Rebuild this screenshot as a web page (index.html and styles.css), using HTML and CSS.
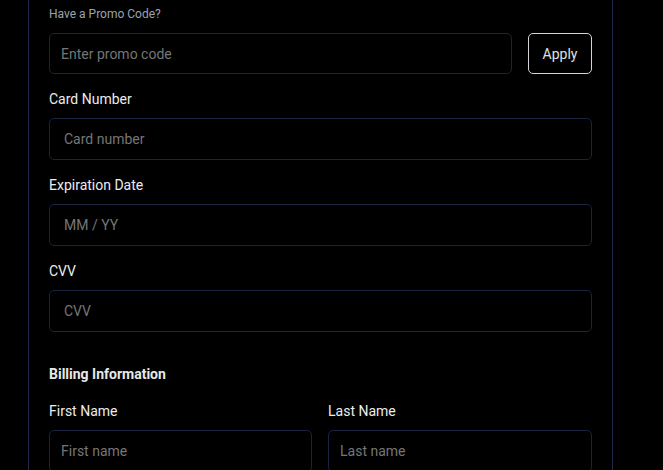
FILE: index.html
```html
<!DOCTYPE html>
<html lang="en">
<head>
<meta charset="utf-8">
<title>Payment</title>
<link rel="stylesheet" href="styles.css">
</head>
<body>
<div class="page">
  <form class="card">
    <div class="promo">
      <div class="promo-label">Have a Promo Code?</div>
      <div class="promo-row">
        <input class="input input-sm" type="text" placeholder="Enter promo code">
        <button class="btn-apply" type="button">Apply</button>
      </div>
    </div>

    <div class="field">
      <label class="label">Card Number</label>
      <input class="input input-card" type="text" placeholder="Card number">
    </div>
    <div class="field">
      <label class="label">Expiration Date</label>
      <input class="input input-card" type="text" placeholder="MM / YY">
    </div>
    <div class="field">
      <label class="label">CVV</label>
      <input class="input input-card" type="text" placeholder="CVV">
    </div>

    <h3 class="section-title">Billing Information</h3>
    <div class="grid-2">
      <div class="field">
        <label class="label">First Name</label>
        <input class="input input-sm" type="text" placeholder="First name">
      </div>
      <div class="field">
        <label class="label">Last Name</label>
        <input class="input input-sm" type="text" placeholder="Last name">
      </div>
    </div>
  </form>
</div>
</body>
</html>
```
FILE: styles.css
```css
* { box-sizing: border-box; }
html, body {
  margin: 0;
  padding: 0;
  background: #000;
  font-family: Roboto, "Liberation Sans", sans-serif;
  color: #e5e7eb;
  overflow: hidden;
}
.page {
  padding: 0 50px 0 28px;
  height: 470px;
}
.card {
  width: 585px;
  border: 1px solid #1c2748;
  border-top: 0;
  border-bottom: 0;
  padding: 6px 20px 40px;
  background: #000;
  height: 470px;
}
.promo-label {
  font-size: 12px;
  line-height: 16px;
  color: #9ca3af;
  margin-bottom: 11px;
}
.promo-row {
  display: flex;
  gap: 16px;
  margin-bottom: 15px;
}
.promo-row .input {
  flex: 1;
  height: 41px;
}
.btn-apply {
  width: 64px;
  height: 41px;
  background: #000;
  border: 1px solid #d4d4d4;
  border-radius: 5px;
  color: #e0e0e0;
  font-family: Roboto, "Liberation Sans", sans-serif;
  font-size: 14px;
  font-weight: 400;
  padding: 0;
}
.field {
  display: flex;
  flex-direction: column;
  margin-bottom: 15px;
}
.label {
  font-size: 14px;
  line-height: 20px;
  font-weight: 400;
  color: #ececec;
  margin-bottom: 9px;
}
.input {
  width: 100%;
  height: 42px;
  background: #000;
  border: 1px solid #1a2440;
  border-radius: 5px;
  color: #e5e7eb;
  font-family: Roboto, "Liberation Sans", sans-serif;
  font-size: 14px;
  outline: none;
}
.input::placeholder { color: #767676; }
.input-card { padding: 0 14px; }
.input-sm { padding: 0 11px; }
.section-title {
  margin: 32px 0 17px;
  font-size: 14px;
  line-height: 20px;
  font-weight: 700;
  color: #e8e8e8;
}
.grid-2 {
  display: grid;
  grid-template-columns: 263px 264px;
  gap: 16px;
}
```
